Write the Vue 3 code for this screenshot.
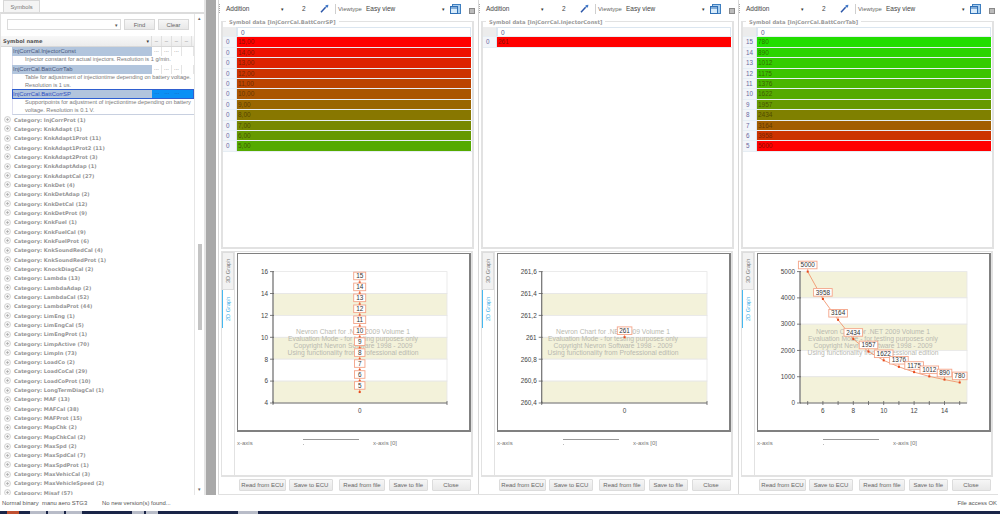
<script setup>
const cats = [['InjCorrProt',1],['KnkAdapt',1],['KnkAdapt1Prot',11],['KnkAdapt1Prot2',11],['KnkAdapt2Prot',3],['KnkAdaptAdap',1],['KnkAdaptCal',27],['KnkDet',4],['KnkDetAdap',2],['KnkDetCal',12],['KnkDetProt',9],['KnkFuel',1],['KnkFuelCal',9],['KnkFuelProt',6],['KnkSoundRedCal',4],['KnkSoundRedProt',1],['KnockDiagCal',2],['Lambda',13],['LambdaAdap',2],['LambdaCal',52],['LambdaProt',44],['LimEng',1],['LimEngCal',5],['LimEngProt',1],['LimpActive',70],['LimpIn',73],['LoadCo',2],['LoadCoCal',29],['LoadCoProt',10],['LongTermDiagCal',1],['MAF',13],['MAFCal',38],['MAFProt',15],['MapChk',2],['MapChkCal',2],['MaxSpd',2],['MaxSpdCal',7],['MaxSpdProt',1],['MaxVehicCal',3],['MaxVehicleSpeed',2],['Misaf',57]]

const symbols = [
  { name: 'InjCorrCal.InjectorConst', lines: ['Injector constant for actual injectors. Resolution is 1 g/min.'] },
  { name: 'InjCorrCal.BattCorrTab', lines: ['Table for adjustment of injectiontime depending on battery voltage.', 'Resolution is 1 us.'] },
  { name: 'InjCorrCal.BattCorrSP', selected: true, lines: ['Supportpoints for adjustment of injectiontime depending on battery', 'voltage. Resolution is 0.1 V.'] }
]

const TOP = 18.6, BOTTOM = 150
const scaleY = (v, min, max) => BOTTOM - (v - min) / (max - min) * (BOTTOM - TOP)

function buildChart({ left, yLabels, min, max, pts, xTicks, xLabels, bandStart }) {
  const right = 210
  const ticks = yLabels.map((t) => ({ label: t[0], y: scaleY(t[1], min, max) }))
  const bands = []
  for (let i = 0; i < ticks.length - 1; i++) {
    bands.push({ y: ticks[i].y, h: ticks[i + 1].y - ticks[i].y, fill: (i + bandStart) % 2 === 0 ? '#f3f2da' : '#ffffff' })
  }
  const points = pts.map((p) => {
    const y = scaleY(p.v, min, max)
    const w = p.label.length >= 4 ? 18.6 : p.label.length === 3 ? 14.6 : p.label.length === 2 ? 12 : 10.5
    return { x: p.x, y, label: p.label, w }
  })
  return { left, right, ticks, bands, points, xTicks, xLabels, line: points.map((p) => p.x + ',' + p.y.toFixed(1)).join(' ') }
}

const chart1 = buildChart({
  left: 36, min: 4, max: 16, bandStart: 1,
  yLabels: [[16, 16], [14, 14], [12, 12], [10, 10], [8, 8], [6, 6], [4, 4]],
  pts: [15, 14, 13, 12, 11, 10, 9, 8, 7, 6, 5].map((v) => ({ x: 122.7, v, label: String(v) })),
  xTicks: [36, 210], xLabels: [{ x: 122.7, t: '0' }]
})
const chart2 = buildChart({
  left: 44.7, min: 260.4, max: 261.6, bandStart: 1,
  yLabels: [['261,6', 261.6], ['261,4', 261.4], ['261,2', 261.2], ['261', 261], ['260,8', 260.8], ['260,6', 260.6], ['260,4', 260.4]],
  pts: [{ x: 127.6, v: 261, label: '261' }],
  xTicks: [44.7, 210], xLabels: [{ x: 127.6, t: '0' }]
})
const vals3 = [5000, 3958, 3164, 2434, 1957, 1622, 1376, 1175, 1012, 890, 780]
const x3 = (n) => 50.7 + (n - 5) * 15.2
const chart3 = buildChart({
  left: 43, min: 0, max: 5000, bandStart: 0,
  yLabels: [[5000, 5000], [4000, 4000], [3000, 3000], [2000, 2000], [1000, 1000], [0, 0]],
  pts: vals3.map((v, i) => ({ x: x3(i + 5), v, label: String(v) })),
  xTicks: vals3.map((_, i) => x3(i + 5)),
  xLabels: [6, 8, 10, 12, 14].map((n) => ({ x: x3(n), t: String(n) }))
})

const panels = [
  {
    title: 'Symbol data [InjCorrCal.BattCorrSP]', chart: chart1, wm: 116,
    rows: [['0', '15,00', '#ff0000'], ['0', '14,00', '#ee1100'], ['0', '13,00', '#dd2200'], ['0', '12,00', '#cc3300'], ['0', '11,00', '#bb4400'], ['0', '10,00', '#aa5500'], ['0', '9,00', '#996600'], ['0', '8,00', '#887700'], ['0', '7,00', '#778800'], ['0', '6,00', '#669900'], ['0', '5,00', '#55aa00']]
  },
  {
    title: 'Symbol data [InjCorrCal.InjectorConst]', chart: chart2, wm: 116,
    rows: [['0', '261', '#ff0000']]
  },
  {
    title: 'Symbol data [InjCorrCal.BattCorrTab]', chart: chart3, wm: 116,
    rows: [['15', '780', '#22dd00'], ['14', '890', '#2bd400'], ['13', '1012', '#33cc00'], ['12', '1175', '#3bc400'], ['11', '1376', '#49b600'], ['10', '1622', '#55aa00'], ['9', '1957', '#669900'], ['8', '2434', '#7f8000'], ['7', '3164', '#a25d00'], ['6', '3958', '#cc3300'], ['5', '5000', '#ff0000']]
  }
]

const watermark = [
  { t: 'Nevron Chart for .NET 2009 Volume 1', y: 81 },
  { t: 'Evaluation Mode - for testing purposes only', y: 88.4 },
  { t: 'Copyright Nevron Software 1998 - 2009', y: 95 },
  { t: 'Using functionality from Professional edition', y: 102.4 }
]
const buttons = [['Read from ECU', 47], ['Save to ECU', 44], ['Read from file', 46], ['Save to file', 38.5], ['Close', 39]]
</script>

<template>
  <div class="screen">
    <div class="main">
      <aside class="side">
        <div class="tabbar"><span class="tab">Symbols</span></div>
        <div class="sidebody">
          <div class="sidemain">
            <div class="search">
              <div class="combo"><span class="caret">▾</span></div>
              <button class="sbtn">Find</button>
              <button class="sbtn">Clear</button>
            </div>
            <div class="thead">
              <span class="thname">Symbol name<span class="caret dark">▾</span></span>
              <span class="thc" v-for="n in 4" :key="n">–</span>
            </div>
            <div class="symbols">
              <div v-for="s in symbols" :key="s.name" class="symbol" :class="{ sel: s.selected }">
                <div class="symrow">
                  <span class="symname">{{ s.name }}</span>
                  <span class="dots">...</span><span class="dots">...</span><span class="dots">...</span><span class="dots last"></span>
                </div>
                <div class="symdesc"><div v-for="l in s.lines" :key="l">{{ l }}</div></div>
              </div>
            </div>
            <div class="tree">
              <div v-for="c in cats" :key="c[0]" class="cat">
                <svg class="plus" width="7" height="7" viewBox="0 0 7 7">
                  <circle cx="3.5" cy="3.5" r="3" fill="#f4f4f4" stroke="#c4c4c4" stroke-width=".7" />
                  <path d="M2 3.5h3M3.5 2v3" stroke="#a8a8a8" stroke-width=".7" />
                </svg>
                <span>Category: {{ c[0] }} ({{ c[1] }})</span>
              </div>
            </div>
          </div>
          <div class="vscroll">
            <span class="sarrow">▴</span>
            <span class="thumb"></span>
            <span class="sarrow down">▾</span>
          </div>
        </div>
      </aside>
      <div class="splitter"></div>
      <section v-for="p in panels" :key="p.title" class="panel">
        <div class="toolbar">
          <span class="grip"></span>
          <span class="tbsel">Addition<span class="caret dark">▾</span></span>
          <span class="tbnum">2</span>
          <svg class="wand" width="9" height="9" viewBox="0 0 9 9">
            <path d="M1 8.2 5.6 3.2" stroke="#2b55a8" stroke-width="1.5" />
            <path d="M5.5 1.2 8.4.8 7.9 3.6 5.6 3.2Z" fill="#3f78c8" />
          </svg>
          <span class="tbsep"></span>
          <span class="tblabel">Viewtype</span>
          <span class="tbview">Easy view<span class="caret dark">▾</span></span>
          <svg class="winicon" width="11" height="10" viewBox="0 0 11 10">
            <rect x="2.5" y=".5" width="8" height="9" fill="#a9cff0" stroke="#3f7fc0" />
            <rect x=".5" y="2.5" width="7" height="7" fill="#d7ebfa" stroke="#2f6fb5" />
            <path d="M1 4h6" stroke="#2f6fb5" />
          </svg>
          <span class="tbbox"></span>
        </div>
        <div class="group">
          <span class="legend">{{ p.title }}</span>
          <div class="gridrow head"><span class="idx blank"></span><span class="val plain">0</span></div>
          <div v-for="r in p.rows" :key="r[1]" class="gridrow">
            <span class="idx">{{ r[0] }}</span>
            <span class="val" :style="{ background: r[2] }">{{ r[1] }}</span>
          </div>
        </div>
        <div class="graph">
          <div class="gtabs">
            <span class="gtab">3D Graph</span>
            <span class="gtab on">2D Graph</span>
          </div>
          <div class="gbody">
            <div class="chartbox">
              <svg class="chart" width="231" height="176" viewBox="1 1 231 176">
                <rect v-for="(b, i) in p.chart.bands" :key="'b' + i" :x="p.chart.left" :y="b.y" :width="p.chart.right - p.chart.left" :height="b.h" :fill="b.fill" stroke="#e6e6e6" stroke-width=".8" />
                <g class="wm">
                  <text v-for="w in watermark" :key="w.t" :x="p.wm" :y="w.y" text-anchor="middle">{{ w.t }}</text>
                </g>
                <line :x1="p.chart.left" :x2="p.chart.left" :y1="TOP" :y2="BOTTOM" stroke="#707070" stroke-width="1.2" />
                <line :x1="p.chart.left" :x2="p.chart.right" :y1="BOTTOM" :y2="BOTTOM" stroke="#606060" stroke-width=".9" />
                <g v-for="t in p.chart.ticks" :key="'t' + t.label">
                  <line :x1="p.chart.left - 3" :x2="p.chart.left + 1" :y1="t.y" :y2="t.y" stroke="#606060" stroke-width=".8" />
                  <text class="axis" :x="p.chart.left - 5" :y="t.y + 2.3" text-anchor="end">{{ t.label }}</text>
                </g>
                <line v-for="x in p.chart.xTicks" :key="'x' + x" :x1="x" :x2="x" :y1="BOTTOM - 2" :y2="BOTTOM + 2" stroke="#606060" stroke-width=".8" />
                <text v-for="l in p.chart.xLabels" :key="'l' + l.t" class="axis" :x="l.x" y="159.5" text-anchor="middle">{{ l.t }}</text>
                <polyline :points="p.chart.line" fill="none" stroke="#f08a60" stroke-width=".8" />
                <g v-for="pt in p.chart.points" :key="'p' + pt.label">
                  <line :x1="pt.x" :x2="pt.x" :y1="pt.y - 3" :y2="pt.y" stroke="#f08a60" stroke-width=".7" />
                  <rect :x="pt.x - 1" :y="pt.y - 1" width="2" height="2" fill="#e8481a" />
                  <rect :x="pt.x - pt.w / 2" :y="pt.y - 10.4" :width="pt.w" height="7.6" fill="#fff" stroke="#f4a488" stroke-width=".9" />
                  <text class="ptl" :x="pt.x" :y="pt.y - 4.4" text-anchor="middle">{{ pt.label }}</text>
                </g>
              </svg>
            </div>
            <div class="axisrow">
              <span class="axname">x-axis</span>
              <span class="axslider"><span class="axline"></span><span class="axdot"></span></span>
              <span class="axval">x-axis [0]</span>
            </div>
          </div>
        </div>
        <div class="actions">
          <button v-for="b in buttons" :key="b[0]" class="abtn" :style="{ width: b[1] + 'px' }">{{ b[0] }}</button>
        </div>
      </section>
    </div>
    <footer class="status">
      <span class="st1">Normal binary</span>
      <span class="st2">manu aero STG3</span>
      <span class="st3">No new version(s) found...</span>
      <span class="st4">File access OK</span>
    </footer>
    <div class="taskbar">
      <span class="start"></span>
      <span class="tk t1"></span><span class="tk t2"></span><span class="tk t3"></span><span class="tk t4"></span><span class="tk t5"></span><span class="tk t6"></span>
    </div>
  </div>
</template>

<style>
html, body { margin: 0; background: #fff; }
</style>

<style scoped>
.screen { width: 1000px; height: 514px; display: flex; flex-direction: column; overflow: hidden; background: #fff; font-family: "Liberation Sans", Arial, sans-serif; font-size: 5.9px; color: #666; }
.main { height: 495px; display: flex; flex: none; }
.side { width: 206px; flex: none; display: flex; flex-direction: column; border-right: 2px solid #e4e4e4; box-sizing: border-box; }
.tabbar { height: 12px; flex: none; padding-left: 3px; display: flex; }
.tab { width: 37px; box-sizing: border-box; background: #f4f4f4; border: 1px solid #d8d8d8; border-bottom: none; text-align: center; line-height: 12px; color: #777; font-size: 5.8px; }
.sidebody { flex: 1; display: flex; border-top: 2px solid #dcdcdc; border-left: 1px solid #e2e2e2; min-height: 0; }
.sidemain { width: 193px; flex: none; overflow: hidden; display: flex; flex-direction: column; border-right: 1px solid #e6e6e6; }
.search { height: 22px; flex: none; display: flex; align-items: flex-start; padding: 5px 0 0 6px; gap: 3px; box-sizing: border-box; }
.combo { width: 114px; height: 11px; box-sizing: border-box; border: 1px solid #dcdcdc; position: relative; }
.caret { position: absolute; right: 2px; top: 1px; font-size: 5px; line-height: 8px; color: #555; }
.caret.dark { color: #333; }
.sbtn { width: 31px; height: 11px; padding: 0; border: 1px solid #d8d8d8; background: linear-gradient(#f6f6f6, #e8e8e8); font: inherit; color: #666; }
.thead { height: 10px; flex: none; display: flex; background: linear-gradient(#f8f8f8, #ececec); border-bottom: 1px solid #d8d8d8; }
.thname { width: 151px; box-sizing: border-box; padding-left: 2px; font-weight: 700; font-family: "DejaVu Sans", sans-serif; font-size: 5.2px; line-height: 10px; color: #555; position: relative; border-right: 1px solid #ddd; }
.thc { width: 10px; text-align: center; line-height: 11px; color: #888; border-right: 1px solid #e0e0e0; box-sizing: border-box; }
.symbols { padding-left: 11px; flex: none; }
.symrow { height: 9px; display: flex; line-height: 9px; color: #4a5a80; }
.symname { width: 140px; flex: none; background: #b2c5dd; padding-left: 1px; box-sizing: border-box; }
.dots { width: 10px; flex: none; text-align: center; border-right: 1px solid #e4e4e4; box-sizing: border-box; color: #777; line-height: 7px; }
.dots.last { width: 12px; }
.symdesc { min-height: 9px; box-sizing: border-box; padding-left: 12px; line-height: 7.3px; padding-top: .4px; white-space: nowrap; color: #7a7a7a; font-size: 5.65px; border-left: 1px solid #dde; }
.sel .symrow { outline: 1px solid #2f5fd0; outline-offset: -1px; height: 10px; line-height: 10px; }
.sel .symname { color: #2f4fc0; }
.sel .dots { background: #0a90f5; color: #2a50a0; border-right: none; }
.sel .symdesc { border-bottom: 1px solid #c8d0e0; }
.tree { padding-left: 3px; }
.cat { height: 9.33px; flex: none; display: flex; align-items: center; gap: 3px; white-space: nowrap; font-family: "DejaVu Sans", sans-serif; font-weight: 700; font-size: 5.1px; color: #949494; }
.plus { flex: none; }
.vscroll { width: 10px; flex: none; position: relative; border-right: 1px solid #e4e4e4; }
.sarrow { position: absolute; left: 3px; top: 1px; font-size: 5px; color: #666; line-height: 6px; }
.sarrow.down { top: auto; bottom: 3px; }
.thumb { position: absolute; left: 3px; top: 230px; width: 4px; height: 86px; background: #c4c4c4; }
.splitter { width: 10px; flex: none; background: #a9a9a9; margin-right: 2px; }
.panel { width: 260px; flex: none; display: flex; flex-direction: column; box-sizing: border-box; border-bottom: 1px solid #e0e0e0; padding-left: 4px; position: relative; }
.panel::before { content: ""; position: absolute; left: 0; top: 0; bottom: 0; width: 1px; background: #d8d8d8; }
.toolbar { height: 17px; flex: none; display: flex; align-items: center; color: #444; position: relative; font-size: 6.5px; }
.grip { width: 1px; height: 9px; margin-left: -3px; border-left: 1px dotted #aaa; }
.tbsel { width: 74px; margin-left: 5px; position: relative; color: #444; }
.tbsel .caret { right: 16px; top: 0; }
.tbnum { width: 19px; margin-left: 2px; }
.wand { flex: none; margin-left: -1px; }
.tbsep { width: 1px; height: 10px; background: #cfcfcf; margin-left: 6px; }
.tblabel { width: 25px; margin-left: 2px; color: #666; font-size: 5.9px; }
.tbview { width: 83px; margin-left: 3px; position: relative; color: #444; }
.tbview .caret { right: 4px; top: 0; }
.winicon { flex: none; margin-left: 1px; }
.tbbox { width: 4px; height: 4px; border: 1px solid #888; background: #bbb; margin-left: 8px; margin-top: 5px; }
.group { height: 228px; width: 253px; flex: none; box-sizing: border-box; margin-top: 4px; border: 2px solid #e2e2e2; border-top-width: 1px; padding: 5px 0 0 0; position: relative; margin-left: -1px; }
.legend { position: absolute; left: 3px; top: -4px; padding: 0 3px; background: #fff; font-family: "DejaVu Sans", sans-serif; font-weight: 700; font-size: 5.2px; line-height: 8px; color: #999; white-space: nowrap; }
.gridrow { height: 10.4px; display: flex; box-sizing: border-box; border-bottom: 1px solid #e6eef4; }
.idx { width: 14px; flex: none; box-sizing: border-box; background: #f2f5f9; border-right: 1px solid #dbe4ee; color: #6a68a0; padding-left: 3px; line-height: 9.4px; font-size: 6.3px; }
.idx.blank { background: #ececec; }
.val { width: 234px; flex: none; box-sizing: border-box; padding-left: 1px; line-height: 9.4px; font-size: 6.5px; color: rgba(50, 30, 0, .6); }
.val.plain { background: #fff; color: #5a5890; padding-left: 3px; border: 1px solid #dbe6f0; border-bottom: none; }
.graph { height: 226px; width: 252px; flex: none; margin: 2px 0 0 -1px; box-sizing: border-box; display: flex; border: 1px solid #e2e2e2; border-width: 1px 2px 2px 1px; }
.gtabs { width: 12px; flex: none; display: flex; flex-direction: column; }
.gtab { height: 38px; writing-mode: vertical-rl; transform: rotate(180deg); text-align: center; font-size: 5.6px; line-height: 11px; background: #f2f2f2; border: 1px solid #ddd; box-sizing: border-box; color: #777; }
.gtab.on { background: #fff; color: #39aee8; border: none; border-right: 1px solid #45b8f0; }
.gbody { flex: 1; border-left: 1px solid #e2e2e2; padding: 1px 0 0 2px; display: flex; flex-direction: column; min-width: 0; }
.chartbox { width: 234px; height: 179px; flex: none; box-sizing: border-box; border: 1px solid #808080; border-width: 1px 2px 2px 1px; background: #fff; overflow: hidden; }
.chart { display: block; }
.axis { font-family: "Liberation Sans", sans-serif; font-size: 6.4px; fill: #444; }
.ptl { font-family: "Liberation Sans", sans-serif; font-size: 6.4px; fill: #333; }
.wm text { font-family: "Liberation Sans", sans-serif; font-size: 6.75px; fill: #b9b9b0; }
.axisrow { display: flex; height: 16px; align-items: center; margin-top: 3px; color: #777; font-size: 6px; }
.axname { width: 66px; }
.axslider { width: 56px; height: 16px; position: relative; flex: none; }
.axline { position: absolute; left: 0; top: 4px; width: 56px; height: 1px; background: #999; }
.axdot { position: absolute; left: 0; top: 9px; width: 1px; height: 1px; background: #bbb; }
.axval { margin-left: 14px; }
.actions { height: 17px; flex: none; display: flex; gap: 3px; padding: 2px 0 0 17px; align-items: flex-start; box-sizing: border-box; }
.abtn { height: 12px; padding: 0; border: 1px solid #dcdcdc; border-radius: 1px; background: linear-gradient(#f6f6f6, #e8e8e8); font: inherit; font-size: 6px; color: #666; }
.abtn:nth-child(3) { margin-left: 3px; }
.abtn:nth-child(4), .abtn:nth-child(5) { margin-left: 1px; }
.status { height: 16px; flex: none; display: flex; align-items: center; color: #555; font-size: 5.9px; }
.st1 { margin-left: 2px; width: 40px; }
.st2 { width: 60px; }
.st3 { width: 100px; }
.st4 { margin-left: auto; margin-right: 3px; }
.taskbar { height: 3px; flex: none; background: #1a2548; display: flex; }
.start { width: 12px; margin-left: 7px; background: #c05030; }
.tk { height: 3px; background: #b8bcc8; width: 16px; }
.t1 { margin-left: 11px; }
.t2, .t3 { margin-left: 2px; }
.t4 { margin-left: 50px; width: 12px; }
.t5 { margin-left: 2px; width: 12px; }
.t6 { margin-left: 80px; width: 20px; }
</style>
